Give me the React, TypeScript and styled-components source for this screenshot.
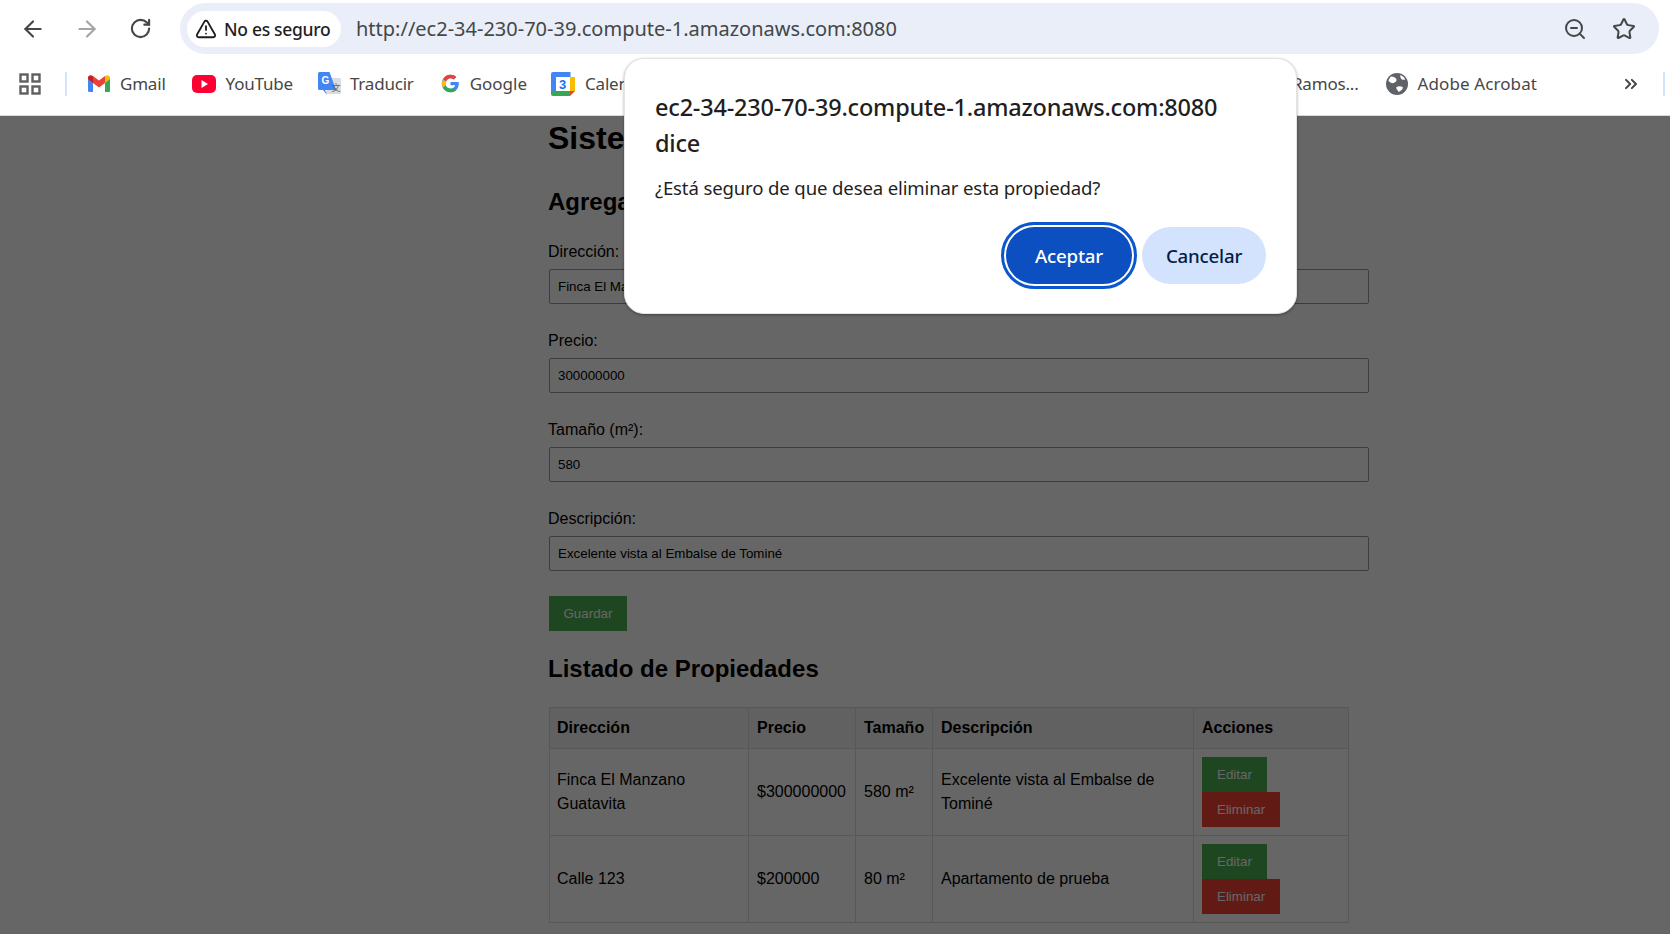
import styled, { createGlobalStyle } from 'styled-components';
import { ArrowLeft, ArrowRight, ChevronsRight, RotateCw, Star, TriangleAlert, ZoomOut } from 'lucide-react';

const GlobalStyle = createGlobalStyle`
    html, body {
        margin: 0;
        padding: 0;
        background: #fff;
        overflow: hidden;
    }
`;

const Window = styled.div`
    position: relative;
    width: 1670px;
    height: 934px;
    overflow: hidden;
    display: flex;
    flex-direction: column;
`;

const Toolbar = styled.div`
    height: 60px;
    display: flex;
    align-items: center;
    padding: 0 11px 3px 20px;
    box-sizing: border-box;
    background: #fff;
`;

const NavButton = styled.div<{ $gap: number; $color?: string }>`
    display: flex;
    margin-right: ${({ $gap }) => $gap}px;
    color: ${({ $color }) => $color || '#444746'};
`;

const Omnibox = styled.div`
    flex: 1;
    height: 51px;
    border-radius: 26px;
    background: #e9eef8;
    display: flex;
    align-items: center;
    padding: 0 23px 0 7px;
    font-family: 'Noto Sans', sans-serif;
`;

const SecurityChip = styled.div`
    width: 154px;
    height: 36px;
    border-radius: 18px;
    background: #fff;
    display: flex;
    align-items: center;
    padding-left: 8px;
    box-sizing: border-box;
    gap: 7px;
    font-size: 17.5px;
    font-weight: 500;
    letter-spacing: -0.3px;
    color: #1f1f1f;
`;

const Url = styled.div`
    flex: 1;
    margin-left: 15px;
    font-size: 20px;
    color: #444746;
    white-space: nowrap;
`;

const OmniIcons = styled.div`
    display: flex;
    align-items: center;
    gap: 25px;
    color: #444746;
`;

const BookmarkBar = styled.div`
    height: 56px;
    display: flex;
    align-items: center;
    padding: 0 0 8px 19px;
    box-sizing: border-box;
    border-bottom: 1px solid #d9d9d9;
    font-family: 'Noto Sans', sans-serif;
    font-size: 17px;
    letter-spacing: -0.2px;
    color: #474747;
    background: #fff;
`;

const Divider = styled.div<{ $left: number; $right: number }>`
    width: 2px;
    height: 24px;
    background: #d3e3fd;
    margin: 0 ${({ $right }) => $right}px 0 ${({ $left }) => $left}px;
`;

const Bookmark = styled.div<{ $gap: number; $iconGap?: number; $tracking?: number }>`
    display: flex;
    align-items: center;
    gap: ${({ $iconGap }) => $iconGap ?? 10}px;
    margin-right: ${({ $gap }) => $gap}px;
    letter-spacing: ${({ $tracking }) => $tracking ?? -0.2}px;
    white-space: nowrap;
`;

const Spacer = styled.div`
    flex: 1;
`;

const PageArea = styled.div`
    position: relative;
    flex: 1;
    overflow: hidden;
    background: #fff;
    font-family: 'Liberation Sans', Arial, sans-serif;
    color: #000;
`;

const Dim = styled.div`
    position: absolute;
    inset: 0;
    background: rgba(0, 0, 0, 0.6);
`;

const Content = styled.div`
    width: 820px;
    margin-left: 549px;
    padding-top: 4px;
`;

const Title = styled.h1`
    margin: 0 0 31px -1px;
    font-size: 32px;
    line-height: 37px;
    font-weight: 700;
`;

const SectionTitle = styled.h2<{ $bottom: number }>`
    margin: 0 0 ${({ $bottom }) => $bottom}px -1px;
    font-size: 24px;
    line-height: 28px;
    font-weight: 700;
`;

const Field = styled.div`
    margin-bottom: 28px;
`;

const Label = styled.label`
    display: block;
    font-size: 16px;
    line-height: 18px;
    margin: 0 0 8px -1px;
`;

const Input = styled.input`
    display: block;
    width: 100%;
    height: 35px;
    box-sizing: border-box;
    padding: 8px;
    border: 1px solid #999;
    border-radius: 2px;
    background: #fff;
    font-family: 'Liberation Sans', Arial, sans-serif;
    font-size: 13.33px;
    color: #000;
`;

const Button = styled.button<{ $bg: string }>`
    display: block;
    height: 35px;
    padding: 0 15px;
    border: 0;
    background: ${({ $bg }) => $bg};
    color: #fff;
    font-family: 'Liberation Sans', Arial, sans-serif;
    font-size: 13.33px;
`;

const SaveButton = styled(Button)`
    margin: -3px 0 24px;
    padding: 0 14.5px;
`;

const Table = styled.table`
    width: 799px;
    table-layout: fixed;
    border-collapse: collapse;
    font-size: 16px;
    line-height: 24px;
`;

const Column = styled.col<{ $width: number }>`
    width: ${({ $width }) => $width}px;
`;

const Th = styled.th`
    height: 41px;
    padding: 8px;
    box-sizing: border-box;
    border: 1px solid #ddd;
    background: #f2f2f2;
    text-align: left;
    font-weight: 700;

    &:first-child {
        padding-left: 7px;
    }
`;

const Td = styled.td`
    padding: 8px;
    border: 1px solid #ddd;
    text-align: left;

    &:first-child {
        padding-left: 7px;
    }
`;

const rows = [
    { address: 'Finca El Manzano Guatavita', price: '$300000000', size: '580 m²', description: 'Excelente vista al Embalse de Tominé' },
    { address: 'Calle 123', price: '$200000', size: '80 m²', description: 'Apartamento de prueba' },
];

const Dialog = styled.div`
    position: absolute;
    left: 624px;
    top: 58px;
    width: 673px;
    height: 256px;
    box-sizing: border-box;
    padding: 30px 30px 0;
    background: #fff;
    border-radius: 20px;
    border: 1px solid #e4e4e4;
    box-shadow: 0 1px 3px rgba(0, 0, 0, 0.35);
    font-family: 'Noto Sans', sans-serif;
    color: #1f1f1f;
`;

const DialogTitle = styled.div`
    width: 580px;
    font-size: 23.5px;
    line-height: 36px;
    font-weight: 500;
    letter-spacing: -0.2px;
`;

const DialogMessage = styled.div`
    margin-top: 13px;
    font-size: 18.6px;
    line-height: 28px;
    letter-spacing: -0.15px;
`;

const DialogActions = styled.div`
    display: flex;
    justify-content: flex-end;
    align-items: center;
    gap: 10px;
    margin-top: 25px;
`;

const DialogButton = styled.button<{ $primary?: boolean }>`
    height: 57px;
    width: ${({ $primary }) => ($primary ? 126 : 124)}px;
    border-radius: 29px;
    border: 0;
    font-family: 'Noto Sans', sans-serif;
    font-size: 18.7px;
    font-weight: 500;
    letter-spacing: -0.2px;
    background: ${({ $primary }) => ($primary ? '#0b4fc0' : '#d3e3fd')};
    color: ${({ $primary }) => ($primary ? '#fff' : '#041e49')};
    outline: ${({ $primary }) => ($primary ? '3px solid #0b57d0' : 'none')};
    outline-offset: 2.5px;
`;

const AppsIcon = () => (
    <svg width="22" height="22" viewBox="0 0 22 22" fill="none" stroke="#5f5f5f" strokeWidth="2.4">
        <rect x="1.5" y="1.5" width="7" height="7" />
        <rect x="13.5" y="1.5" width="7" height="7" />
        <rect x="1.5" y="13.5" width="7" height="7" />
        <rect x="13.5" y="13.5" width="7" height="7" />
    </svg>
);

const GmailIcon = () => (
    <svg width="22" height="17" viewBox="0 0 22 17">
        <path d="M0 3v12.5A1.5 1.5 0 0 0 1.5 17H5V7z" fill="#4285f4" />
        <path d="M22 3v12.5a1.5 1.5 0 0 1-1.5 1.5H17V7z" fill="#34a853" />
        <path d="M17 1v7l5-4V2.5C22 .6 19.6-.5 18 .7z" fill="#fbbc04" />
        <path d="M5 8V1l6 4.6L17 1v7l-6 4.6z" fill="#ea4335" />
        <path d="M0 2.5V4l5 4V1L4 .7C2.400-.5 0 .6 0 2.500z" fill="#c5221f" />
    </svg>
);

const YouTubeIcon = () => (
    <svg width="24" height="18" viewBox="0 0 24 18">
        <rect width="24" height="18" rx="5" fill="#ff0033" />
        <path d="M9.500 5l6.500 4-6.500 4z" fill="#fff" />
    </svg>
);

const TranslateIcon = () => (
    <svg width="23" height="24" viewBox="0 0 23 24">
        <path d="M9 6h12.500A1.500 1.500 0 0 1 23 7.500v13a1.500 1.500 0 0 1-1.500 1.500H8z" fill="#dadce0" />
        <path d="M1.500 0h10L18 18H7l2 5-4-5H1.500A1.500 1.500 0 0 1 0 16.500v-15A1.500 1.500 0 0 1 1.500 0z" fill="#4285f4" />
        <text x="3.500" y="12" fontSize="10" fontWeight="700" fontFamily="Liberation Sans" fill="#fff">G</text>
        <text x="13.500" y="19" fontSize="9" fontFamily="Noto Sans CJK SC" fill="#5f6368">文</text>
    </svg>
);

const GoogleIcon = () => (
    <svg width="19" height="19" viewBox="0 0 48 48">
        <path d="M44.500 20H24v8.500h11.800C34.700 33.900 30.100 37 24 37c-7.200 0-13-5.800-13-13s5.800-13 13-13c3.100 0 5.900 1.100 8.100 2.900l6.400-6.400C34.600 4.100 29.600 2 24 2 11.800 2 2 11.800 2 24s9.800 22 22 22c11 0 21-8 21-22 0-1.300-.2-2.700-.5-4z" fill="#4285f4" />
        <path d="M6.300 13.700l7 5.100C15.200 14.300 19.300 11 24 11c3.100 0 5.900 1.100 8.100 2.900l6.400-6.400C34.600 4.100 29.600 2 24 2 15.500 2 8.200 6.800 6.300 13.700z" fill="#ea4335" />
        <path d="M24 46c5.500 0 10.400-1.900 14.200-5.100l-6.600-5.500C29.600 36.700 27 37 24 37c-6 0-10.600-3.100-11.800-8.400l-7 5.400C8.100 41 15.400 46 24 46z" fill="#34a853" />
        <path d="M5.200 34l7-5.400C11.400 27 11 25.500 11 24s.4-3.500 1.300-5.200l-7-5.100C3 17 2 20.400 2 24s1.100 7 3.200 10z" fill="#fbbc05" />
    </svg>
);

const CalendarIcon = () => (
    <svg width="24" height="24" viewBox="0 0 24 24">
        <rect width="24" height="24" rx="2" fill="#fff" />
        <path d="M2 0h17.500v5H5v14.500H0V2a2 2 0 0 1 2-2z" fill="#4285f4" />
        <path d="M19 5h5v14h-5z" fill="#fbbc04" />
        <path d="M0 19h19v5H2a2 2 0 0 1-2-2z" fill="#34a853" />
        <path d="M19 19h5l-5 5z" fill="#ea4335" />
        <text x="8" y="17" fontSize="13" fontWeight="700" fontFamily="Liberation Sans" fill="#1a73e8">3</text>
    </svg>
);

const GlobeIcon = () => (
    <svg width="22" height="22" viewBox="0 0 22 22">
        <circle cx="11" cy="11" r="11" fill="#5f6368" />
        <path d="M5 3.500c2.500 0 5 1 5.500 3s-1.500 3-3 3.500-3.500-.5-5-2C3 6 4 4.500 5 3.500zM14.500 2c2 .8 3.800 2.300 4.700 4.500-1.700.5-3.400.3-4.200-1s-.8-2.200-.5-3.500zM10.500 14c2-1 4.500-1 6 0s-1.500 4-4 5c-.3-1.700-3-3.300-2-5z" fill="#fff" />
    </svg>
);

const App = () => (
    <Window>
        <GlobalStyle />
        <Toolbar>
            <NavButton $gap={28}>
                <ArrowLeft size={26} strokeWidth={2} />
            </NavButton>
            <NavButton $gap={29} $color="#a3a5a8">
                <ArrowRight size={26} strokeWidth={2} />
            </NavButton>
            <NavButton $gap={28}>
                <RotateCw size={23} strokeWidth={2.2} />
            </NavButton>
            <Omnibox>
                <SecurityChip>
                    <TriangleAlert size={22} strokeWidth={2} />
                    No es seguro
                </SecurityChip>
                <Url>http://ec2-34-230-70-39.compute-1.amazonaws.com:8080</Url>
                <OmniIcons>
                    <ZoomOut size={24} strokeWidth={2} />
                    <Star size={24} strokeWidth={2} />
                </OmniIcons>
            </Omnibox>
        </Toolbar>
        <BookmarkBar>
            <AppsIcon />
            <Divider $left={24} $right={21} />
            <Bookmark $gap={26}>
                <GmailIcon />
                Gmail
            </Bookmark>
            <Bookmark $gap={25}>
                <YouTubeIcon />
                YouTube
            </Bookmark>
            <Bookmark $gap={27} $iconGap={9}>
                <TranslateIcon />
                Traducir
            </Bookmark>
            <Bookmark $gap={24} $tracking={0}>
                <GoogleIcon />
                Google
            </Bookmark>
            <Bookmark $gap={0}>
                <CalendarIcon />
                Calendar
            </Bookmark>
            <Spacer />
            <Bookmark $gap={27}>Ramos...</Bookmark>
            <Bookmark $gap={84} $tracking={0.1}>
                <GlobeIcon />
                Adobe Acrobat
            </Bookmark>
            <NavButton $gap={0}>
                <ChevronsRight size={20} strokeWidth={2.4} />
            </NavButton>
            <Divider $left={22} $right={5} />
        </BookmarkBar>
        <PageArea>
            <Content>
                <Title>Sistema de Gestión de Propiedades</Title>
                <SectionTitle $bottom={27}>Agregar Propiedad</SectionTitle>
                <form>
                    <Field>
                        <Label>Dirección:</Label>
                        <Input readOnly value="Finca El Manzano Guatavita" />
                    </Field>
                    <Field>
                        <Label>Precio:</Label>
                        <Input readOnly value="300000000" />
                    </Field>
                    <Field>
                        <Label>Tamaño (m²):</Label>
                        <Input readOnly value="580" />
                    </Field>
                    <Field>
                        <Label>Descripción:</Label>
                        <Input readOnly value="Excelente vista al Embalse de Tominé" />
                    </Field>
                    <SaveButton type="button" $bg="#4caf50">
                        Guardar
                    </SaveButton>
                </form>
                <SectionTitle $bottom={24}>Listado de Propiedades</SectionTitle>
                <Table>
                    <colgroup>
                        <Column $width={199} />
                        <Column $width={107} />
                        <Column $width={77} />
                        <Column $width={261} />
                        <Column $width={155} />
                    </colgroup>
                    <thead>
                        <tr>
                            <Th>Dirección</Th>
                            <Th>Precio</Th>
                            <Th>Tamaño</Th>
                            <Th>Descripción</Th>
                            <Th>Acciones</Th>
                        </tr>
                    </thead>
                    <tbody>
                        {rows.map(row => (
                            <tr key={row.address}>
                                <Td>{row.address}</Td>
                                <Td>{row.price}</Td>
                                <Td>{row.size}</Td>
                                <Td>{row.description}</Td>
                                <Td>
                                    <Button type="button" $bg="#4caf50">
                                        Editar
                                    </Button>
                                    <Button type="button" $bg="#f44336">
                                        Eliminar
                                    </Button>
                                </Td>
                            </tr>
                        ))}
                    </tbody>
                </Table>
            </Content>
            <Dim />
        </PageArea>
        <Dialog>
            <DialogTitle>ec2-34-230-70-39.compute-1.amazonaws.com:8080 dice</DialogTitle>
            <DialogMessage>¿Está seguro de que desea eliminar esta propiedad?</DialogMessage>
            <DialogActions>
                <DialogButton $primary>Aceptar</DialogButton>
                <DialogButton>Cancelar</DialogButton>
            </DialogActions>
        </Dialog>
    </Window>
);

export default App;
